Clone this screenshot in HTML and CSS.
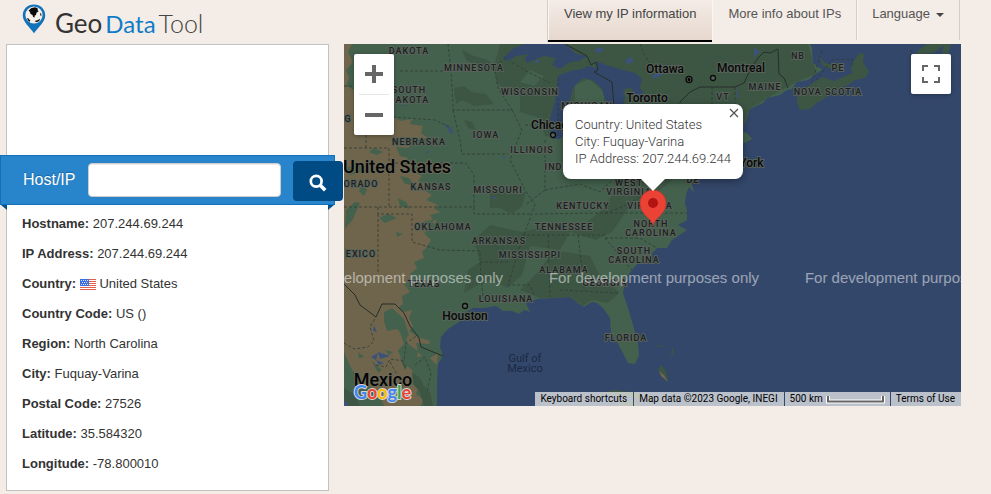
FILE: index.html
```html
<!DOCTYPE html>
<html lang="en">
<head>
<meta charset="utf-8">
<title>Geo Data Tool</title>
<link rel="stylesheet" href="styles.css">
</head>
<body>
<header class="header">
  <a class="logo" href="#">
    <svg class="logo-pin" viewBox="0 0 24 30" aria-hidden="true">
      <path fill="#1273bd" d="M12 .5C5.500.5.8 5.200.8 11.200c0 7 6.200 10.800 11.200 18 5-7.200 11.200-11 11.200-18C23.200 5.200 18.500.5 12 .5z"/>
      <circle cx="12" cy="11" r="8.600" fill="#f6f0eb"/>
      <path fill="#0b0b0b" d="M6.500 6.500l3-2.500 4-.8 2.500 1.500-.5 1.500 1.200 1-2.200 1.500-.5 2.200-1.500.8.2 1.800-1.600-.6-.6-2-2-1L8 8zM5 14l1.500.5 1.800 2.200-.4 1L6 16.500zM12.500 17l3-.8 2.500-1.400-.6 2-2.600 1.400zM18 9l1.200.8.2 2.200-1-.5z"/>
    </svg>
    <span class="logo-text"><span class="geo">Geo</span><span class="data">Data</span><span class="tool">Tool</span></span>
  </a>
  <nav class="nav">
    <a class="nav-item active" href="#">View my IP information</a>
    <a class="nav-item" href="#">More info about IPs</a>
    <a class="nav-item" href="#">Language<span class="caret"></span></a>
  </nav>
</header>

<main class="main">
  <section class="panel">
    <form class="search">
      <label for="host">Host/IP</label>
      <input id="host" type="text">
      <button type="button" aria-label="Search">
        <svg viewBox="0 0 20 20" aria-hidden="true"><circle cx="8" cy="8" r="6" fill="none" stroke="#fff" stroke-width="3"/><path d="M12.500 12.500l5.500 5.500" stroke="#fff" stroke-width="4"/></svg>
      </button>
    </form>
    <ul class="details">
      <li><b>Hostname:</b> 207.244.69.244</li>
      <li><b>IP Address:</b> 207.244.69.244</li>
      <li><b>Country:</b>
        <svg class="flag" viewBox="0 0 16 11" aria-hidden="true">
          <path fill="#fff" d="M0 0h16v11H0z"/>
          <path stroke="#e0604f" d="M0 .5h16M0 2.500h16M0 4.500h16M0 6.500h16M0 8.500h16M0 10.500h16"/>
          <path fill="#3d6fe0" d="M0 0h9v7H0z"/>
          <path stroke="#d5e0ff" stroke-dasharray="1 1" d="M1 1.500h7M2 3.500h6M1 5.500h7"/>
        </svg>
        United States</li>
      <li><b>Country Code:</b> US ()</li>
      <li><b>Region:</b> North Carolina</li>
      <li><b>City:</b> Fuquay-Varina</li>
      <li><b>Postal Code:</b> 27526</li>
      <li><b>Latitude:</b> 35.584320</li>
      <li><b>Longitude:</b> -78.800010</li>
    </ul>
  </section>

  <section class="map" aria-label="Map">
    <svg class="map-canvas" viewBox="344 44 617 362" preserveAspectRatio="xMidYMid slice">
      <path class="water" d="M344 44h617v362H344z"/>
      <!-- mainland -->
      <path class="land" d="M344 44H810L812 47 813 63 822 70 817 73 808 80 797 82 792 89 787 90 780 95 767 98 763 103 750 109 746 121 740 130 747 133 752 139 745 143 735 142 728 150 712 156 706 168 701 178 696 171 692 184 694 193 689 187 686 194 685 203 687 210 687 220 678 225 687 230 672 240 667 248 657 248 647 260 638 263 632 270 625 280 623 293 628 308 633 325 638 343 639 356 635 364 628 363 623 353 617 342 611 333 610 318 603 308 597 303 592 302 584 307 579 304 570 297 553 298 537 299 526 303 530 312 524 310 519 314 512 311 503 311 496 306 484 308 473 308 465 313 459 322 448 329 441 337 440 347 443 356 438 364 437 382 437 406H344z"/>
      <!-- northern woods and Appalachians -->
      <path class="forest" d="M500 44H808L813 63 817 73 797 82 767 98 750 109 742 130 712 156 690 165 640 178 610 160 590 140 545 136 540 118 520 112 520 95 497 84 494 66z"/>
      <path class="forest" d="M690 165L660 190 630 206 612 232 596 240 570 232 560 250 530 246 522 275 508 288 490 280 476 286 464 293 468 270 480 262 474 240 490 225 522 232 548 226 580 228 604 208 615 190 640 180z"/>
      <path class="forest" d="M553 250L590 256 602 280 620 292 608 303 592 300 583 306 570 297 540 298 520 290 540 270zM490 192l8-6 12 8 16-2-4 14-10 8-12-6-10 0zM454 88l10-2 8 6 14 2 8 10-20 2-12-6-6 4zM462 50l12 6 14 4 8 10-16-2-14-8zM464 120l8 2 4 8-8-2z"/>
      <path class="land" d="M602 256l22 2-2 12 6 12-8 6-12-16zM636 232l20-6 16 4-14 14-14 8zM580 200l16-6 4 12-18 4zM575 85l14-6 14 12 2 16-30 2zM530 70l14 6-10 10-14-4z"/>
      <!-- dry west -->
      <path class="dry" d="M344 44H352L348 52 353 62 346 70 349 78 346 86 354 90V120L385 122 394 117 400 121 412 119 410 124 423 126 421 133 428 138 416 139 404 137 398 141 412 144 408 148 396 147 400 156 408 158 404 163 414 165 410 170 422 176 418 181 430 185 424 190 432 195 426 200 438 205 434 209 441 212 430 215 433 220 424 221 430 228 424 233 431 240 426 248 422 252 424 258 414 262 417 268 410 274 413 281 404 284 410 292 402 296 403 304 398 308 404 312 412 310 409 318 413 326 409 331 418 337 430 341 429 344 416 343 418 351 408 344 404 334 400 332 404 344 398 350 402 361 412 370 416 379 410 380 420 386 416 394 424 400 420 406H384L378 392 366 384 352 370 344 352z"/>
      <path class="dry" d="M430 358l8-5-1 12-4-4zM418 352l4 4-5 1zM432 222l5-3-2 5zM434 168l4 2-4 2z"/>
      <path class="land" d="M346 210l9-8 5 1-7 16-8 10zM384 312l8-4 12 11 5 16-3 4-9-10-10 2-3-10zM344 168l16-3 2 7-12 3zM379 218l9-4 9 4-12 5zM362 184l5 6-3 6-5-5zM374 148l9 4-6 3-8-3zM400 176l9 2 5 7-9-1zM398 198l8 4 4 7-10-3zM345 246l3 10-3 4zM396 232l7 2-6 3zM344 372l12 9 9 14-2 11h-19zM358 352l6 5-5 1zM372 361l10 9-4 3zM385 350l8 2-4 3z"/>
      <path class="forest" d="M412 372l8 6 4 8 6 6 3 14h-9l-4-14-7-8zM344 388l12 8 4 10h-16zM400 358l7 8-2 4z"/>
      <path class="lake" d="M374 325l3 7-4-1zM371 357l7-4-2 7zM378 352l12 4-10 3zM376 360l8 3-5 2zM344 399l5 7h-5z"/>
      <!-- great lakes -->
      <path class="water" d="M503 58L514 48 524 44h42l10 10 11 2-8 5-9 1-10 7-8-4 4-7-12-2-8 3-9 4-2-5 4-4-13 2-9 5zM558 76l12-5 12-2 6-3 10 2-2-7 10 4 17 5 12 3 7 6-2 8 4 8 6 1-3 4-10-3-6-9-8 1 2 8-2 9-1 8h-18l2-12-4-13-8-8-10-3-6 4-5 6-2 8-2 8 1 12-6 18-4 5h-6l-5-12 2-12 4-14zM606 116l28 14 15-3-22 12-22-2zM646 114l14-9 15-1 2 7-22 6z"/>
      <path class="lake" d="M625 60l6-3 3 5-7 2zM594 51l5-4 5 3-4 3zM651 76l10-5 3 3-9 5zM535 60h4v3h-4zM445 123l8 8-1 4-6-8zM408 82l2 8-2 3zM398 106l9-1v1zM425 152l6-1-4 2zM492 196l6 2-5 1zM502 156l5 2h-5zM736 86l3 11-2 1zM754 48l6 3-6 7z"/>
      <!-- maritimes, Newfoundland, Cuba, Bahamas -->
      <path class="forest" d="M797 97l6-7 11-8 9-5 11 4 11-5 7-3-1-7 8-13 5 1-1 8 6 10-4 6-10 2-7 5-12 5-9 7-10 6-7 6-10 1-3-7zM818 55l7 8 16 4-5 3-13-4zM911 58l9-9 7-5h24l-4 12-5-2 2-9-10 8-12 1-9 6zM600 394l13-4 25 3 18 4 6 6-22-5-24-2zM655 346l8-1 1 1-8 1zM671 346l3 5-2 5-1-1 1-4zM661 365l5 6 2 11-7-9-3-3z"/>
      <path class="dry" d="M659 371l5 4 4 7-7-6z"/>
      <path class="forest" d="M618 402l14-2 8 6h-22z"/>
      <!-- state lines -->
      <path class="state" d="M344 86h10M400 71h51M448 44l3 27 2 34v5h59M393 117l42 3 17 8M453 110l7 30 2 14h46M395 163h71l8 12v32M344 207h130M389 148v59M344 148h45M366 135v13M378 207v7h34v28l28 8 40 1v11l3 36M378 214v58M474 207v7h56M480 262h30M512 110l10 20-12 30 15 30 10 15-13 35-14 45h22l4 9M535 214l65-1h87M522 235h84M548 235l2 62M578 235l6 50v6M560 290l58 3M605 238h35l17 10M605 238l27 32M545 140v50l-20 15M512 110l-14-22-4-22 12-8M525 125h25M545 190l35-6 20 8 12-12M582 140v40M550 83l-20-10-20-12M680 102v30h30M712 87v45h24M735 87v40M648 192l-24 14-20 8M648 156l44 2M692 158v25M558 78v58M590 107v30M344 343l10 6 14-2 6-6-4-14 6-10M376 365l10 2 4-8 14 2 2-18 12-8M390 362l8 14 8 20M415 365l10-8 6 16-4 20"/>
      <path class="state" d="M640 44l4 10 8 12M812 82l10-32M816 80l16-20 20-1v7M911 62V50"/>
      <path class="nation" d="M565 44l22 12 4 9 5-3 2 8-4 2 18 10 2 24M344 284l11 11 5 10 16 12 6-13h13l9 9 6 13 9 12 2 9 22 9M680 102l10-10 10-5h35l9-4 6-13 8-12 6-6 6 1 8-4 1 25 5 4 4 10"/>

      <g class="state-name">
        <text x="409" y="54">DAKOTA</text><text x="474" y="71">MINNESOTA</text><text x="409" y="93">SOUTH</text><text x="409" y="103">DAKOTA</text>
        <text x="530" y="95">WISCONSIN</text><text x="419" y="145">NEBRASKA</text><text x="486" y="138">IOWA</text><text x="532" y="153">ILLINOIS</text><text x="566" y="170">INDIANA</text>
        <text x="348" y="122">G</text><text x="361" y="187">ORADO</text><text x="431" y="190">KANSAS</text><text x="498" y="193">MISSOURI</text><text x="587" y="109">MICHIGAN</text>
        <text x="629" y="186">WEST</text><text x="629" y="195">VIRGINIA</text><text x="583" y="209">KENTUCKY</text><text x="650" y="209">VIRGINIA</text><text x="693" y="183">DE</text>
        <text x="651" y="227">NORTH</text><text x="651" y="236">CAROLINA</text><text x="564" y="230">TENNESSEE</text><text x="443" y="230">OKLAHOMA</text><text x="499" y="244">ARKANSAS</text>
        <text x="530" y="258">MISSISSIPPI</text><text x="634" y="254">SOUTH</text><text x="634" y="263">CAROLINA</text><text x="564" y="273">ALABAMA</text><text x="605" y="286">GEORGIA</text>
        <text x="424" y="287">TEXAS</text><text x="506" y="302">LOUISIANA</text><text x="626" y="341">FLORIDA</text><text x="361" y="257">EXICO</text>
        <text x="765" y="90">MAINE</text><text x="723" y="100">VT</text><text x="798" y="59">NB</text><text x="838" y="71">PE</text><text x="828" y="95">NOVA SCOTIA</text>
      </g>
      <g class="city-name">
        <text x="665" y="73">Ottawa</text><text x="741" y="72">Montreal</text><text x="647" y="102">Toronto</text><text x="553" y="129">Chicago</text><text x="738" y="167">New York</text><text x="465" y="320">Houston</text>
      </g>
      <g class="city-dot"><circle cx="689" cy="79.500" r="3"/><circle cx="713" cy="78" r="2.500"/><circle cx="553" cy="135" r="2.500"/><circle cx="465" cy="306" r="2.500"/></g>
      <circle cx="689" cy="79.500" r="1.500"/>
      <g class="country-name"><text x="397" y="173">United States</text><text x="383" y="386">Mexico</text></g>
      <g class="sea-name"><text x="525" y="362">Gulf of</text><text x="525" y="372">Mexico</text></g>
      <g class="notice"><text x="398" y="283">For development purposes only</text><text x="654" y="283">For development purposes only</text><text x="910" y="283">For development purposes only</text></g>

      <path fill="#ea4335" stroke="#b9352b" stroke-width=".6" d="M653 226c-1-8-13-11-13-23a13 13 0 0 1 26 0c0 12-12 15-13 23z"/>
      <circle cx="653" cy="203" r="5" fill="#b31412"/>
      <text class="google" x="354" y="399"><tspan fill="#4285f4">G</tspan><tspan fill="#ea4335">o</tspan><tspan fill="#fbbc04">o</tspan><tspan fill="#4285f4">g</tspan><tspan fill="#34a853">l</tspan><tspan fill="#ea4335">e</tspan></text>
    </svg>

    <div class="zoom">
      <button type="button" aria-label="Zoom in"><svg viewBox="0 0 18 18"><path d="M0 9h18M9 0v18"/></svg></button>
      <button type="button" aria-label="Zoom out"><svg viewBox="0 0 18 18"><path d="M0 9h18"/></svg></button>
    </div>
    <button class="fullscreen" type="button" aria-label="Toggle fullscreen">
      <svg viewBox="0 0 18 18"><path fill="#666" d="M0 0v6h2V2h4V0zM18 0h-6v2h4v4h2zM18 18v-6h-2v4h-4v2zM2 12H0v6h6v-2H2z"/></svg>
    </button>

    <div class="bubble">
      <button type="button" aria-label="Close"><svg viewBox="0 0 10 10"><path d="M1 1l8 8M9 1L1 9" stroke="#555" stroke-width="1.300"/></svg></button>
      <div>Country: United States</div>
      <div>City: Fuquay-Varina</div>
      <div>IP Address: 207.244.69.244</div>
    </div>

    <div class="credits">
      <button type="button">Keyboard shortcuts</button>
      <span>Map data ©2023 Google, INEGI</span>
      <span class="scale">500 km<svg viewBox="0 0 59 9" aria-hidden="true"><path class="scale-edge" d="M2 1v5.500h55V1"/><path class="scale-line" d="M2 1v5.500h55V1"/></svg></span>
      <a href="#">Terms of Use</a>
    </div>
  </section>
</main>
</body>
</html>
```
FILE: styles.css
```css
* { box-sizing: border-box; }

body {
  margin: 0;
  background: #f4ece6;
  color: #333;
  font: 13px/20px "Liberation Sans", Arial, sans-serif;
}

a { color: inherit; text-decoration: none; }
button { border: 0; padding: 0; cursor: pointer; }
svg { display: block; }

.header {
  display: flex;
  justify-content: space-between;
  align-items: flex-start;
  height: 44px;
  padding: 0 31px 0 22px;
}

.logo { display: flex; gap: 9px; padding-top: 4px; }
.logo-pin { width: 24px; height: 30px; }
.logo-text {
  display: flex;
  align-items: baseline;
  padding-top: 3px;
  font: 26px/32px Lato, sans-serif;
}
.geo { color: #333; }
.data { margin: 0 3px; font-size: 24px; color: #0f7cc9; }
.tool { font-size: 25px; font-weight: 300; color: #444; }

.nav { display: flex; border-left: 1px solid #d6ccc4; }
.nav-item {
  height: 40px;
  padding: 4px 15px 16px;
  border-right: 1px solid #d6ccc4;
  box-shadow: inset 1px 0 #faf6f2;
  color: #555;
}
.nav-item:nth-child(2) { padding: 4px 15px 16px 16px; }
.nav-item.active {
  height: 42px;
  padding: 4px 16px 16px;
  border-right: 0;
  border-bottom: 2px solid #000;
  background: linear-gradient(#f4ece6, #e6d8ce);
  color: #444;
}
.caret {
  display: inline-block;
  margin-left: 6px;
  border: 4px solid transparent;
  border-top-color: #444;
  border-bottom: 0;
  vertical-align: middle;
}

.main {
  display: flex;
  align-items: flex-start;
  gap: 15px;
  padding: 0 30px 3px 6px;
}

.panel {
  flex: none;
  width: 323px;
  padding: 110px 0 16px;
  border: 1px solid #c2c2c2;
  background: #fff;
}

.search {
  position: relative;
  z-index: 1;
  display: flex;
  align-items: center;
  height: 50px;
  margin: 0 -7px;
  padding: 0 0 0 22px;
  border: 1px solid #1270ba;
  background: #2985cb;
}
.search::before,
.search::after {
  content: "";
  position: absolute;
  top: 49px;
  border-top: 5px solid #00528f;
}
.search::before { left: 0; border-left: 6px solid transparent; }
.search::after { right: 0; border-right: 6px solid transparent; }
.search label {
  flex: none;
  width: 65px;
  color: #fff;
  font-size: 16px;
  text-shadow: 0 -1px 1px #1a65a0;
}
.search input {
  flex: none;
  width: 193px;
  height: 34px;
  padding: 4px 6px;
  border: 1px solid #ccc;
  border-radius: 4px;
  background: #fff;
  box-shadow: inset 0 1px 1px rgba(0, 0, 0, .08);
}
.search button {
  flex: none;
  width: 50px;
  height: 40px;
  margin: 2px 0 0 12px;
  border-radius: 4px;
  background: #004b84;
}
.search svg { width: 18px; height: 18px; margin: 3px auto 0; }

.details { margin: 0; padding: 9px 15px 0; list-style: none; }
.details li + li { margin-top: 10px; }
.flag { display: inline-block; width: 16px; height: 11px; vertical-align: -2px; }

.map {
  position: relative;
  flex: 1;
  min-width: 0;
  height: 362px;
  overflow: hidden;
  font-family: Roboto, sans-serif;
}
.map-canvas { width: 100%; height: 100%; }
.water { fill: #33476a; }
.lake { fill: #3c5278; }
.land { fill: #44614d; }
.forest { fill: #3d5644; }
.dry { fill: #6f654c; }
.state { fill: none; stroke: #2d3a31; stroke-width: 1; stroke-dasharray: 3 2; opacity: .75; }
.nation { fill: none; stroke: #272d2a; stroke-width: 1; }
.map-canvas text { text-anchor: middle; paint-order: stroke; stroke-linejoin: round; }
.state-name { font-size: 9px; font-weight: 500; letter-spacing: 1px; fill: #1c211f; stroke: #59635b; stroke-width: 2px; }
.city-name { font-size: 12px; font-weight: 500; fill: #080808; stroke: #59635b; stroke-width: 2px; }
.country-name { font-size: 18px; font-weight: 500; fill: #050505; stroke: #6a6a5b; stroke-width: 2px; }
.sea-name { font-size: 11px; fill: #1b2944; }
.city-dot { fill: #59635b; stroke: #0b0b0b; stroke-width: 1.3px; }
.notice { font: 15px "Liberation Sans", Arial, sans-serif; fill: #fff; opacity: .5; }
.map-canvas .google { font: 700 18px Lato, sans-serif; text-anchor: start; stroke: #d5d5d2; stroke-width: 2px; }

.zoom,
.fullscreen {
  position: absolute;
  top: 10px;
  width: 40px;
  border-radius: 2px;
  background: #fff;
  box-shadow: 0 1px 4px rgba(0, 0, 0, .3);
}
.zoom { left: 10px; }
.zoom button { display: block; width: 40px; height: 40px; background: none; }
.zoom button + button { width: 30px; height: 41px; margin: 0 5px; border-top: 1px solid #e6e6e6; }
.zoom svg, .fullscreen svg { width: 18px; height: 18px; margin: auto; }
.zoom path { stroke: #666; stroke-width: 4px; }
.fullscreen { right: 10px; height: 40px; }

.bubble {
  position: absolute;
  top: 60px;
  left: 219px;
  padding: 12px;
  border-radius: 8px;
  background: #fff;
  box-shadow: 0 2px 7px 1px rgba(0, 0, 0, .3);
  color: #333;
  font-size: 13px;
  font-weight: 300;
  line-height: 17px;
}
.bubble::after {
  content: "";
  position: absolute;
  top: 100%;
  left: 50%;
  margin-left: -12px;
  border: 12px solid transparent;
  border-top-color: #fff;
  border-bottom: 0;
}
.bubble button { position: absolute; top: 4px; right: 4px; background: none; }
.bubble svg { width: 10px; height: 10px; }

.credits {
  position: absolute;
  right: 0;
  bottom: 0;
  display: flex;
  gap: 1px;
  color: #000;
  font-size: 10px;
  line-height: 14px;
}
.credits > * {
  height: 14px;
  padding: 0 6px 0 5px;
  background: rgba(245, 245, 245, .7);
  color: #000;
  font: inherit;
  white-space: nowrap;
}
.credits .scale { display: flex; align-items: center; gap: 3px; padding: 0 5px; }
.scale svg { width: 59px; height: 9px; }
.scale path { fill: none; }
.scale-edge { stroke: #fff; stroke-width: 4px; }
.scale-line { stroke: #666; stroke-width: 2px; }
```
